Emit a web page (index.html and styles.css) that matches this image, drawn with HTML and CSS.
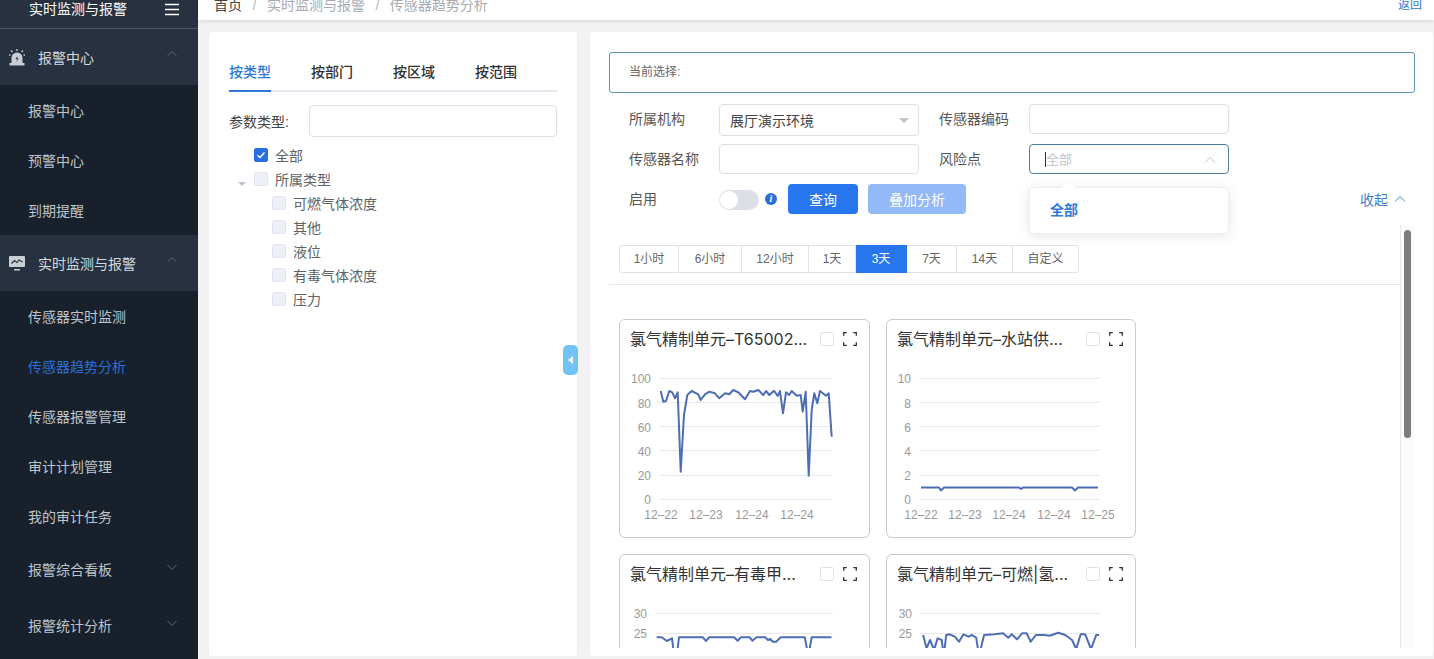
FILE: index.html
```html
<!DOCTYPE html>
<html lang="zh-CN">
<head>
  <meta charset="UTF-8">
  <title>传感器趋势分析</title>
  <link rel="stylesheet" href="styles.css">
</head>
<body>

<div class="app">
  <aside class="sidebar">
    <div class="brand">
      <span class="brand-name">实时监测与报警</span>
      <svg class="burger" width="16" height="13" viewBox="0 0 16 13"><path d="M1 1.5h14M1 6.5h14M1 11.5h14" stroke="#fff" stroke-width="1.5" fill="none"/></svg>
    </div>

    <div class="menu-head">
      <svg class="menu-icon" width="18" height="18" viewBox="0 0 18 18"><path d="M3.500 16V10a5.500 5.500 0 0 1 11 0v6z" fill="#c9ced4"/><path d="M1.500 15h15v2.500h-15z" fill="#c9ced4"/><path d="M9.800 7.500 7.600 11h1.500l-.8 3 2.300-3.800H9z" fill="#283242"/><path d="M9 1v2M3 2.500l1.500 1.500M15 2.500 13.500 4M1 7h1.500M15.500 7H17" stroke="#c9ced4" stroke-width="1.300" fill="none"/></svg>
      <span class="menu-text">报警中心</span>
      <svg class="caret" width="12" height="8" viewBox="0 0 12 8"><path d="M1.500 6 6 1.500 10.500 6" stroke="#5d6875" fill="none"/></svg>
    </div>
    <a class="menu-item">报警中心</a>
    <a class="menu-item">预警中心</a>
    <a class="menu-item">到期提醒</a>

    <div class="menu-head">
      <svg class="menu-icon" width="18" height="16" viewBox="0 0 18 16"><rect x="1" y="1" width="16" height="11" rx="1" fill="#c9ced4"/><path d="M6 14h6v1.500H6z" fill="#c9ced4"/><path d="M3.500 8.500 6.500 5.500 9 7.500l2-2.500 3.500 2" stroke="#283242" stroke-width="1.200" fill="none"/></svg>
      <span class="menu-text">实时监测与报警</span>
      <svg class="caret" width="12" height="8" viewBox="0 0 12 8"><path d="M1.500 6 6 1.500 10.500 6" stroke="#5d6875" fill="none"/></svg>
    </div>
    <a class="menu-item">传感器实时监测</a>
    <a class="menu-item active">传感器趋势分析</a>
    <a class="menu-item">传感器报警管理</a>
    <a class="menu-item">审计计划管理</a>
    <a class="menu-item">我的审计任务</a>
    <a class="menu-item item-sub item-board">报警综合看板
      <svg class="caret" width="12" height="8" viewBox="0 0 12 8"><path d="M1.500 2 6 6.500 10.500 2" stroke="#5d6875" fill="none"/></svg>
    </a>
    <a class="menu-item item-sub">报警统计分析
      <svg class="caret" width="12" height="8" viewBox="0 0 12 8"><path d="M1.500 2 6 6.500 10.500 2" stroke="#5d6875" fill="none"/></svg>
    </a>
  </aside>

  <main class="main">
    <header class="crumbs">
      <span class="crumb-home">首页</span>
      <span class="crumb-sep">/</span>
      <span class="crumb">实时监测与报警</span>
      <span class="crumb-sep">/</span>
      <span class="crumb">传感器趋势分析</span>
      <a class="back">返回</a>
    </header>

    <div class="content">
      <section class="panel-left">
        <div class="tabs">
          <span class="tab tab-on">按类型</span>
          <span class="tab">按部门</span>
          <span class="tab">按区域</span>
          <span class="tab">按范围</span>
        </div>
        <div class="param-row">
          <label class="param-label">参数类型:</label>
          <div class="input param-input"></div>
        </div>
        <ul class="tree">
          <li class="tree-row"><span class="check checked"><svg width="14" height="14" viewBox="0 0 14 14"><path d="M3.500 7.200 6 9.500l4.500-5" stroke="#fff" stroke-width="1.400" fill="none"/></svg></span>全部</li>
          <li class="tree-row"><span class="tree-arrow"></span><span class="check"></span>所属类型</li>
          <li class="tree-row leaf"><span class="check"></span>可燃气体浓度</li>
          <li class="tree-row leaf"><span class="check"></span>其他</li>
          <li class="tree-row leaf"><span class="check"></span>液位</li>
          <li class="tree-row leaf"><span class="check"></span>有毒气体浓度</li>
          <li class="tree-row leaf"><span class="check"></span>压力</li>
        </ul>
        <div class="fold-handle"><span class="fold-arrow"></span></div>
      </section>

      <section class="panel-right">
        <div class="current">当前选择:</div>

        <div class="filters">
          <div class="filter-row">
            <label class="f-label">所属机构</label>
            <div class="input f-input select-text">展厅演示环境<span class="select-arrow"></span></div>
            <label class="f-label f-label-2">传感器编码</label>
            <div class="input f-input"></div>
          </div>
          <div class="filter-row">
            <label class="f-label">传感器名称</label>
            <div class="input f-input"></div>
            <label class="f-label f-label-2">风险点</label>
            <div class="input f-input risk-open">
              <span class="cursor"></span><span class="placeholder">全部</span>
              <svg class="risk-caret" width="12" height="8" viewBox="0 0 12 8"><path d="M1 6.500 6 1.500l5 5" stroke="#c0c4cc" fill="none"/></svg>
              <div class="dropdown">
                <span class="dropdown-nub"></span>
                <div class="dropdown-item">全部</div>
              </div>
            </div>
          </div>
          <div class="filter-row">
            <label class="f-label">启用</label>
            <span class="switch"><span class="switch-knob"></span></span>
            <span class="info">i</span>
            <button class="btn btn-primary">查询</button>
            <button class="btn btn-disabled">叠加分析</button>
            <a class="collapse">收起
              <svg width="12" height="8" viewBox="0 0 12 8"><path d="M1 6.500 6 1.500l5 5" stroke="#3f7fcf" fill="none"/></svg>
            </a>
          </div>
        </div>

        <div class="scroll-wrap">
          <div class="scroll-body">
            <div class="ranges">
              <span class="range">1小时</span>
              <span class="range">6小时</span>
              <span class="range">12小时</span>
              <span class="range">1天</span>
              <span class="range range-on">3天</span>
              <span class="range">7天</span>
              <span class="range">14天</span>
              <span class="range">自定义</span>
            </div>

            <div class="cards">
              <article class="card">
                <div class="card-head">
                  <span class="card-title">氯气精制单元–T65002...</span>
                  <span class="card-check"></span>
                  <svg class="card-full" width="14" height="14" viewBox="0 0 14 14"><path d="M.7 3.800V.7h3.100M10.200.7h3.100v3.100M13.300 10.200v3.100h-3.100M3.800 13.300H.7v-3.100" stroke="#333" stroke-width="1.300" fill="none"/></svg>
                </div>
                <svg class="chart" width="249" height="176" viewBox="0 0 249 176">
                  <g class="grid"><path d="M39 42.500h173M39 66.500h173M39 90.500h173M39 114.500h173M39 139.500h173M39 163.500h173"/></g>
                  <g class="axis">
                    <text x="31" y="47" text-anchor="end">100</text><text x="31" y="72" text-anchor="end">80</text><text x="31" y="96" text-anchor="end">60</text><text x="31" y="120" text-anchor="end">40</text><text x="31" y="144" text-anchor="end">20</text><text x="31" y="168" text-anchor="end">0</text>
                    <text x="41" y="183" text-anchor="middle">12–22</text><text x="86" y="183" text-anchor="middle">12–23</text><text x="132" y="183" text-anchor="middle">12–24</text><text x="177" y="183" text-anchor="middle">12–24</text>
                  </g>
                  <path class="line" d="M40.700 55 43.300 65.700 46 65 49.300 55 52.300 56.300 55 62.300 57.700 56.300 60.700 135.700 64 79 67.300 59 71.700 55 78.300 58.300 80.700 64 85 58.300 89.300 55.700 95 57.300 99.300 62.300 105 57.300 109.300 58.300 113.300 54 118.300 56.300 125 63.300 130 55 133.300 55.700 138.300 54 143.300 59 146 55 149.300 59 154 54.700 157.700 60 160 55 163 77.300 166 56.300 169 59 171.700 55 176.700 59.700 180.700 59 182.700 75.700 185.700 55.700 188.700 139.700 191.700 74 194.300 57.300 197.300 67.300 200 55 206 59.700 208.700 57.300 211.700 100.700"/>
                </svg>
              </article>

              <article class="card">
                <div class="card-head">
                  <span class="card-title">氯气精制单元–水站供...</span>
                  <span class="card-check"></span>
                  <svg class="card-full" width="14" height="14" viewBox="0 0 14 14"><path d="M.7 3.800V.7h3.100M10.200.7h3.100v3.100M13.300 10.200v3.100h-3.100M3.800 13.300H.7v-3.100" stroke="#333" stroke-width="1.300" fill="none"/></svg>
                </div>
                <svg class="chart" width="249" height="176" viewBox="0 0 249 176">
                  <g class="grid"><path d="M32 42.500h181M32 66.500h181M32 90.500h181M32 114.500h181M32 139.500h181M32 163.500h181"/></g>
                  <g class="axis">
                    <text x="24" y="47" text-anchor="end">10</text><text x="24" y="72" text-anchor="end">8</text><text x="24" y="96" text-anchor="end">6</text><text x="24" y="120" text-anchor="end">4</text><text x="24" y="144" text-anchor="end">2</text><text x="24" y="168" text-anchor="end">0</text>
                    <text x="34" y="183" text-anchor="middle">12–22</text><text x="78" y="183" text-anchor="middle">12–23</text><text x="122" y="183" text-anchor="middle">12–24</text><text x="167" y="183" text-anchor="middle">12–24</text><text x="211" y="183" text-anchor="middle">12–25</text>
                  </g>
                  <path class="line" d="M34 151.500 52 151.500 54 154.500 57 151.500 132 151.500 134 153 136 151.500 185 151.500 188 154.500 191 151.500 211 151.500"/>
                </svg>
              </article>

              <article class="card">
                <div class="card-head">
                  <span class="card-title">氯气精制单元–有毒甲...</span>
                  <span class="card-check"></span>
                  <svg class="card-full" width="14" height="14" viewBox="0 0 14 14"><path d="M.7 3.800V.7h3.100M10.200.7h3.100v3.100M13.300 10.200v3.100h-3.100M3.800 13.300H.7v-3.100" stroke="#333" stroke-width="1.300" fill="none"/></svg>
                </div>
                <svg class="chart" width="249" height="176" viewBox="0 0 249 176">
                  <g class="grid"><path d="M35 42.500h178M35 62.500h178M35 82.500h178"/></g>
                  <g class="axis">
                    <text x="27" y="47" text-anchor="end">30</text><text x="27" y="67" text-anchor="end">25</text><text x="27" y="87" text-anchor="end">20</text>
                  </g>
                  <path class="line" d="M36.600 66.300 41.700 66.300 46.900 70 52 67.300 55.500 95 59 66.300 83 66.300 85.900 70 89.300 66.300 114.100 66.300 117.600 69.700 121 66.300 129.700 66.300 132.400 69.700 136.600 66.300 145.200 66.300 147.900 69 150.300 68 152.800 70.700 156.200 70.700 160.700 66.300 184.800 66.300 188.300 85 191.700 66.300 211.400 66.300"/>
                </svg>
              </article>

              <article class="card">
                <div class="card-head">
                  <span class="card-title">氯气精制单元–可燃|氢...</span>
                  <span class="card-check"></span>
                  <svg class="card-full" width="14" height="14" viewBox="0 0 14 14"><path d="M.7 3.800V.7h3.100M10.200.7h3.100v3.100M13.300 10.200v3.100h-3.100M3.800 13.300H.7v-3.100" stroke="#333" stroke-width="1.300" fill="none"/></svg>
                </div>
                <svg class="chart" width="249" height="176" viewBox="0 0 249 176">
                  <g class="grid"><path d="M33 42.500h181M33 62.500h181M33 82.500h181"/></g>
                  <g class="axis">
                    <text x="25" y="47" text-anchor="end">30</text><text x="25" y="67" text-anchor="end">25</text><text x="25" y="87" text-anchor="end">20</text>
                  </g>
                  <path class="line" d="M36.100 64 39.600 77.300 43 69 47.100 79 50.600 67.300 54.700 69 56.800 85 59.200 64 62.700 63.300 67.800 65.700 72 70.700 76.400 63.300 81.600 65.700 85 64 89.200 66.700 92 85 97.100 64 107.500 63.300 116.100 62.300 121.300 66.700 124.700 63.300 129.900 68.300 135.100 62.300 139.600 62.300 143.700 70.700 148.900 64 157.500 64 162.700 64.700 171.300 61.700 178.200 64 185.100 69 189.200 78 193.700 63.300 198.200 63.300 204 78 209.200 64 212 64"/>
                </svg>
              </article>
            </div>
          </div>
          <div class="scrollbar"><span class="scroll-thumb"></span></div>
        </div>
      </section>
    </div>
  </main>
</div>

</body>
</html>
```

FILE: styles.css
```css
html, body {
  margin: 0;
  padding: 0;
  height: 100%;
  overflow: hidden;
  font-family: "Liberation Sans", "Noto Sans CJK SC", sans-serif;
  font-size: 14px;
  color: #555;
}

.app {
  display: flex;
  height: 659px;
  overflow: hidden;
  background-color: #f2f2f2;
}

/* sidebar */
.sidebar {
  flex: 0 0 198px;
  background-color: #18212b;
  color: #bfc4ca;
}

.brand {
  height: 28px;
  display: flex;
  align-items: center;
  justify-content: space-between;
  padding: 0 18px 0 29px;
  background-color: #273140;
  border-bottom: 1px solid #4a5462;
  color: #fff;
}

.brand-name {
  position: relative;
  top: -5px;
  line-height: 20px;
}

.burger {
  position: relative;
  top: -5px;
}

.menu-head {
  height: 56px;
  display: flex;
  align-items: center;
  padding: 0 20px 0 8px;
  background-color: #273140;
  color: #d5d8dc;
}

.menu-icon {
  flex: 0 0 18px;
}

.menu-text {
  margin-left: 12px;
  flex: 1;
}

.caret {
  flex: none;
  position: relative;
  top: -3px;
}

.menu-item {
  display: block;
  height: 50px;
  line-height: 52px;
  padding-left: 28px;
}

.menu-item.active {
  color: #2c6fd8;
}

.item-sub {
  height: 56px;
  line-height: 56px;
  padding-right: 20px;
  display: flex;
  align-items: center;
  justify-content: space-between;
}

.item-board {
  margin-top: 1px;
}

/* breadcrumb */
.main {
  flex: 1;
  min-width: 0;
  display: flex;
  flex-direction: column;
}

.crumbs {
  flex: 0 0 20px;
  display: flex;
  align-items: flex-end;
  padding: 0 12px 0 16px;
  background-color: #fff;
  box-shadow: 0 1px 4px rgba(0,0,0,0.12);
  line-height: 20px;
  height: 20px;
  overflow: hidden;
  position: relative;
}

.crumbs span {
  position: relative;
  top: -5px;
}

.crumb-home {
  color: #444;
}

.crumb {
  color: #a8abb2;
}

.crumb-sep {
  color: #b5b8be;
  margin: 0 10.5px;
}

.back {
  margin-left: auto;
  color: #2f78d6;
  font-size: 12px;
  position: relative;
  top: -5px;
}

.content {
  flex: 1;
  min-height: 0;
  display: flex;
  gap: 11px;
  padding: 11px 0 2px 11px;
}

/* left panel */
.panel-left {
  position: relative;
  flex: 0 0 369px;
  margin-left: -1px;
  background-color: #fff;
  border: 1px solid #efefef;
  border-radius: 4px;
  box-sizing: border-box;
  padding: 20px 20px 0;
}

.tabs {
  display: flex;
  border-bottom: 2px solid #e4e7ed;
  height: 40px;
  box-sizing: border-box;
}

.tab {
  width: 82px;
  line-height: 40px;
  color: #303133;
  font-weight: 500;
}

.tab-on {
  color: #2f78d6;
  position: relative;
}

.tab-on::after {
  content: "";
  position: absolute;
  left: 0;
  bottom: -2px;
  width: 42px;
  height: 2px;
  background-color: #2f78d6;
}

.param-row {
  display: flex;
  align-items: center;
  margin-top: 13px;
}

.param-label {
  width: 80px;
  color: #444;
}

.input {
  box-sizing: border-box;
  border: 1px solid #dcdfe6;
  border-radius: 4px;
  background-color: #fff;
}

.param-input {
  flex: 1;
  height: 32px;
}

.tree {
  list-style: none;
  margin: 6px 0 0;
  padding: 0;
}

.tree-row {
  position: relative;
  height: 24px;
  display: flex;
  align-items: center;
  padding-left: 25px;
  color: #606266;
}

.tree-row.leaf {
  padding-left: 43px;
}

.check {
  flex: 0 0 14px;
  height: 14px;
  box-sizing: border-box;
  margin-right: 7px;
  border-radius: 2px;
  background-color: #eef0f8;
  border: 1px solid #e2e4ef;
  display: flex;
}

.check.checked {
  background-color: #2a6fe0;
  border-color: #2a6fe0;
}

.check.checked svg {
  margin: -1px;
}

.tree-arrow {
  position: absolute;
  left: 9px;
  top: 15px;
  border: 4px solid transparent;
  border-top: 4px solid #c0c4cc;
  border-bottom: 0;
}

.fold-handle {
  position: absolute;
  right: -1px;
  top: 313px;
  width: 15px;
  height: 30px;
  background-color: #6fc3f7;
  border-radius: 5px;
  display: flex;
  align-items: center;
  justify-content: center;
}

.fold-arrow {
  border: 4px solid transparent;
  border-right: 5px solid #fff;
  border-left: 0;
}

/* right panel */
.panel-right {
  flex: 1;
  min-width: 0;
  background-color: #fff;
  border: 1px solid #efefef;
  border-radius: 4px;
  box-sizing: border-box;
  padding: 20px 18px 0 19px;
  display: flex;
  flex-direction: column;
  overflow: hidden;
}

.current {
  flex: none;
  box-sizing: border-box;
  height: 41px;
  line-height: 39px;
  padding-left: 19px;
  border: 1px solid #5c93b4;
  border-radius: 3px;
  font-size: 12px;
  color: #666;
}

.filters {
  flex: none;
  padding: 11px 20px 0;
}

.filter-row {
  display: flex;
  align-items: flex-start;
  height: 32px;
  margin-bottom: 8px;
}

.f-label {
  width: 90px;
  line-height: 30px;
  color: #555;
  flex: none;
}

.f-label-2 {
  margin-left: 20px;
}

.f-input {
  flex: 0 0 200px;
  height: 30px;
  position: relative;
}

.select-text {
  height: 32px;
  line-height: 33px;
  padding-left: 10px;
  color: #444;
}

.select-arrow {
  position: absolute;
  right: 9px;
  top: 13px;
  border: 5px solid transparent;
  border-top: 5px solid #c0c4cc;
  border-bottom: 0;
}

.risk-open {
  border-color: #4c7fa3;
  display: flex;
  align-items: center;
  padding-left: 15px;
}

.cursor {
  width: 1px;
  height: 15px;
  background-color: #333;
}

.placeholder {
  margin-top: -2px;
  color: #c0c4cc;
  font-size: 13px;
}

.risk-caret {
  position: absolute;
  right: 12px;
  top: 11px;
}

.dropdown {
  position: absolute;
  left: -1px;
  top: 42px;
  width: 200px;
  height: 47px;
  box-sizing: border-box;
  background-color: #fff;
  border: 1px solid #eee;
  border-radius: 4px;
  box-shadow: 0 2px 12px rgba(0,0,0,0.1);
  z-index: 5;
}

.dropdown-nub {
  position: absolute;
  left: 34px;
  top: -5px;
  width: 9px;
  height: 9px;
  background-color: #fff;
  transform: rotate(45deg);
}

.dropdown-item {
  position: relative;
  padding-left: 20px;
  line-height: 45px;
  color: #2f78d6;
  font-weight: 700;
}

.switch {
  flex: none;
  width: 40px;
  height: 20px;
  margin-top: 6px;
  border-radius: 10px;
  background-color: #dcdfe6;
  display: flex;
  align-items: center;
}

.switch-knob {
  width: 18px;
  height: 18px;
  margin-left: 1px;
  border-radius: 50%;
  background-color: #fff;
}

.info {
  flex: none;
  margin: 9px 0 0 6px;
  width: 12px;
  height: 12px;
  border-radius: 50%;
  background-color: #2a6fd8;
  color: #fff;
  font: italic 700 10px/12px "Liberation Serif", serif;
  text-align: center;
}

.btn {
  flex: none;
  height: 30px;
  border: 0;
  border-radius: 4px;
  color: #fff;
  font: inherit;
}

.btn-primary {
  width: 70px;
  margin-left: 11px;
  background-color: #2876ee;
}

.btn-disabled {
  width: 98px;
  margin-left: 10px;
  background-color: #93b9f6;
}

.collapse {
  margin-left: auto;
  margin-right: -11px;
  height: 30px;
  display: flex;
  align-items: center;
  gap: 6px;
  color: #3f7fcf;
}

/* charts */
.scroll-wrap {
  flex: 1;
  min-height: 0;
  display: flex;
  margin: 1px 1px 8px 0;
  overflow: hidden;
}

.scroll-body {
  flex: 1;
  min-width: 0;
  overflow: hidden;
}

.scrollbar {
  flex: 0 0 14px;
  background-color: #fafafa;
  border-left: 1px solid #e8e8e8;
  box-sizing: border-box;
  padding: 5px 3px 0 3px;
}

.scroll-thumb {
  display: block;
  height: 208px;
  border-radius: 4px;
  background-color: #7d7d7d;
}

.ranges {
  display: flex;
  margin: 20px 0 11px 10px;
  height: 28px;
}

.range {
  box-sizing: border-box;
  width: 56px;
  height: 28px;
  line-height: 26px;
  text-align: center;
  border: 1px solid #e1e3e8;
  border-left: 0;
  font-size: 12px;
  color: #666;
}

.range:nth-child(1) { width: 60px; }
.range:nth-child(2) { width: 63px; }
.range:nth-child(3) { width: 67px; }
.range:nth-child(4) { width: 47px; }
.range:nth-child(5) { width: 51px; }
.range:nth-child(6) { width: 50px; }
.range:nth-child(8) { width: 66px; }

.range:first-child {
  border-left: 1px solid #e1e3e8;
  border-radius: 3px 0 0 3px;
}

.range:last-child {
  border-radius: 0 3px 3px 0;
}

.range-on {
  background-color: #2876ee;
  border-color: #2876ee;
  color: #fff;
}

.cards {
  border-top: 1px solid #e4e7ed;
  padding: 34px 0 0 10px;
  display: grid;
  grid-template-columns: 251px 250px;
  gap: 16px;
}

.card {
  box-sizing: border-box;
  height: 219px;
  border: 1px solid #c8cacd;
  border-radius: 6px;
  overflow: hidden;
}

.card-head {
  height: 38px;
  display: flex;
  align-items: center;
  padding: 0 12px 0 10px;
  color: #333;
  font-family: Inter, "Noto Sans CJK SC", sans-serif;
  font-size: 16px;
}

.card-title {
  flex: 1;
  min-width: 0;
  margin-top: -2px;
  white-space: nowrap;
  overflow: hidden;
}

.card-check {
  flex: none;
  box-sizing: border-box;
  width: 14px;
  height: 14px;
  margin-right: 9px;
  border: 1px solid #e3e3e3;
  border-radius: 2px;
}

.card-full {
  flex: none;
}

.chart {
  display: block;
  margin-top: -22px;
  overflow: visible;
}

.grid path {
  stroke: #e6e8eb;
  fill: none;
}

.axis text {
  font-size: 12px;
  fill: #999;
}

.line {
  fill: none;
  stroke: #4d6db5;
  stroke-width: 2;
  stroke-linejoin: round;
}
```
